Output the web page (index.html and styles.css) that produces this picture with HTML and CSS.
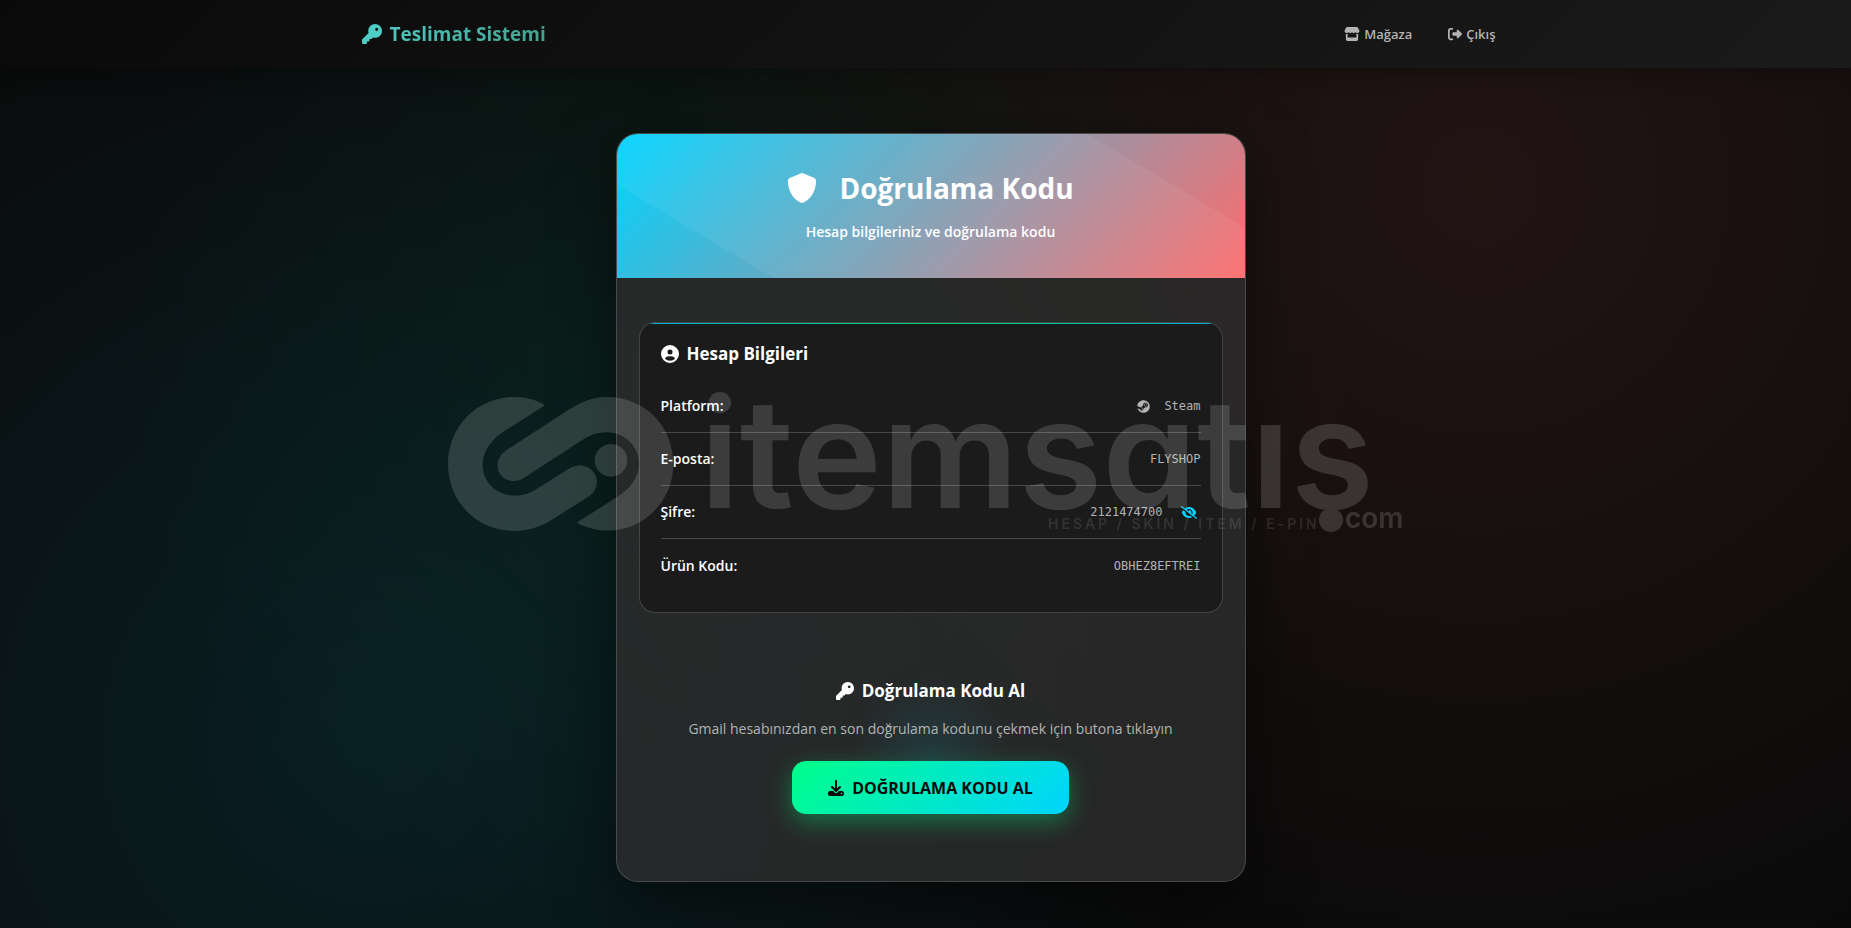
FILE: index.html
```html
<!DOCTYPE html>
<html lang="tr">
<head>
  <meta charset="UTF-8">
  <meta name="viewport" content="width=device-width, initial-scale=1.0">
  <title>Teslimat Sistemi</title>
  <link rel="stylesheet" href="styles.css">
</head>
<body>
  <header class="navbar">
    <div class="navbar-inner">
      <a href="#" class="brand">
        <svg class="icon" viewBox="0 0 512 512"><path d="M336 352c97.200 0 176-78.800 176-176S433.200 0 336 0S160 78.800 160 176c0 18.700 2.900 36.800 8.300 53.700L7 391c-4.500 4.500-7 10.600-7 17v80c0 13.300 10.700 24 24 24h80c13.300 0 24-10.700 24-24V448h40c13.300 0 24-10.700 24-24V384h40c6.400 0 12.500-2.500 17-7l33.300-33.300c16.900 5.400 35 8.300 53.700 8.300zM376 96a40 40 0 1 1 0 80 40 40 0 1 1 0-80z"/></svg>
        Teslimat Sistemi
      </a>
      <nav class="nav-links">
        <a href="#" class="nav-link">
          <svg class="icon icon--store" viewBox="0 0 576 512"><path d="M547.6 103.800L490.300 13.100C485.200 5 476.100 0 466.400 0H109.600C99.900 0 90.800 5 85.700 13.100L28.300 103.800c-29.600 46.800-3.400 111.900 51.900 119.400c4 .5 8.100 .8 12.100 .8c26.100 0 49.300-11.400 65.200-29c15.900 17.600 39.100 29 65.200 29c26.100 0 49.300-11.400 65.200-29c15.900 17.600 39.100 29 65.200 29c26.200 0 49.300-11.400 65.200-29c16 17.600 39.100 29 65.200 29c4.100 0 8.100-.3 12.100-.8c55.500-7.400 81.800-72.500 52.100-119.400zM499.700 254.900l-.1 0c-5.300 .7-10.700 1.100-16.200 1.100c-12.400 0-24.300-1.900-35.400-5.300V384H128V250.600c-11.200 3.500-23.200 5.400-35.600 5.400c-5.500 0-11-.4-16.300-1.100l-.1 0c-4.100-.6-8.100-1.300-12-2.300V384v64c0 35.300 28.700 64 64 64H448c35.300 0 64-28.700 64-64V384 252.600c-4 1-8 1.800-12.300 2.300z"/></svg>
          Mağaza
        </a>
        <a href="#" class="nav-link">
          <svg class="icon" viewBox="0 0 512 512"><path d="M377.900 105.900L500.700 228.700c7.200 7.200 11.300 17.100 11.300 27.300s-4.100 20.100-11.300 27.300L377.900 406.100c-6.400 6.400-15 9.900-24 9.900c-18.700 0-33.900-15.200-33.900-33.900l0-62.100-128 0c-17.700 0-32-14.300-32-32l0-64c0-17.700 14.300-32 32-32l128 0 0-62.100c0-18.700 15.200-33.900 33.900-33.900c9 0 17.600 3.600 24 9.900zM160 96L96 96c-17.700 0-32 14.300-32 32l0 256c0 17.700 14.300 32 32 32l64 0c17.700 0 32 14.300 32 32s-14.300 32-32 32l-64 0c-53 0-96-43-96-96L0 128C0 75 43 32 96 32l64 0c17.700 0 32 14.300 32 32s-14.300 32-32 32z"/></svg>
          Çıkış
        </a>
      </nav>
    </div>
  </header>

  <main class="main">
    <div class="card">
      <div class="card-header">
        <h1 class="card-title">
          <svg class="icon icon--shield" viewBox="0 0 512 512"><path d="M256 0c4.600 0 9.200 1 13.400 2.900L457.700 82.800c22 9.300 38.400 31 38.300 57.200c-.5 99.200-41.300 280.700-213.600 363.200c-16.700 8-36.100 8-52.800 0C57.300 420.700 16.500 239.200 16 140c-.1-26.200 16.300-47.900 38.300-57.200L242.700 2.900C246.800 1 251.400 0 256 0z"/></svg>
          Doğrulama Kodu
        </h1>
        <p class="card-subtitle">Hesap bilgileriniz ve doğrulama kodu</p>
      </div>

      <div class="card-body">
        <section class="account">
          <h2 class="section-title">
            <svg class="icon icon--title" viewBox="0 0 512 512"><path d="M399 384.200C376.900 345.800 335.400 320 288 320H224c-47.400 0-88.900 25.800-111 64.200c35.200 39.200 86.200 63.800 143 63.800s107.800-24.700 143-63.800zM0 256a256 256 0 1 1 512 0A256 256 0 1 1 0 256zm256 16a72 72 0 1 0 0-144 72 72 0 1 0 0 144z"/></svg>
            Hesap Bilgileri
          </h2>
          <dl class="info-list">
            <div class="info-row">
              <dt class="info-label">Platform:</dt>
              <dd class="info-value">
                <svg class="icon icon--steam" viewBox="0 0 496 512"><path d="M496 256c0 137-111.200 248-248.400 248-113.800 0-209.600-76.300-239-180.400l95.200 39.300c6.400 32.100 34.900 56.400 68.900 56.400 39.200 0 71.900-32.400 70.200-73.500l84.500-60.200c52.100 1.300 95.800-40.900 95.800-93.500 0-51.600-42-93.500-93.700-93.500s-93.700 42-93.700 93.500v1.200L176.600 279c-15.500-.9-30.700 3.400-43.500 12.100L0 236.100C10.200 108.400 117.100 8 247.600 8 384.800 8 496 119 496 256zM155.700 384.300l-30.500-12.600a52.790 52.790 0 0 0 27.200 25.800c26.900 11.200 57.800-1.600 69-28.400 5.400-13 5.500-27.300.1-40.300-5.400-13-15.500-23.200-28.500-28.600-12.900-5.400-26.700-5.200-38.900-.6l31.500 13c19.800 8.200 29.200 30.900 20.900 50.700-8.300 19.900-31 29.200-50.800 21zm173.800-129.900c-34.400 0-62.400-28-62.400-62.300s28-62.300 62.400-62.300 62.400 28 62.400 62.300-27.900 62.300-62.400 62.300zm.1-15.600c25.900 0 46.900-21 46.900-46.800 0-25.900-21-46.800-46.900-46.800s-46.900 21-46.900 46.800c.1 25.800 21.100 46.800 46.900 46.800z"/></svg>
                Steam
              </dd>
            </div>
            <div class="info-row">
              <dt class="info-label">E-posta:</dt>
              <dd class="info-value">FLYSHOP</dd>
            </div>
            <div class="info-row">
              <dt class="info-label">Şifre:</dt>
              <dd class="info-value">
                2121474700
                <button type="button" class="toggle-btn" aria-label="Şifreyi gizle">
                  <svg class="icon icon--eye" viewBox="0 0 640 512"><path d="M38.800 5.100C28.400-3.100 13.300-1.200 5.100 9.200S-1.200 34.700 9.200 42.900l592 464c10.400 8.200 25.500 6.300 33.700-4.100s6.300-25.500-4.100-33.700L525.600 386.700c39.600-40.600 66.400-86.100 79.900-118.400c3.300-7.900 3.300-16.700 0-24.600c-14.900-35.700-46.200-87.700-93-131.100C465.500 68.800 400.800 32 320 32c-68.200 0-125 26.300-169.300 60.800L38.800 5.100zM223.100 149.500C248.600 126.200 282.700 112 320 112c79.500 0 144 64.500 144 144c0 24.900-6.300 48.300-17.400 68.700L408 294.500c8.400-19.300 10.600-41.400 4.800-63.300c-11.100-41.500-47.800-69.400-88.600-71.100c-5.800-.2-9.200 6.100-7.400 11.700c2.100 6.400 3.300 13.200 3.300 20.300c0 10.200-2.400 19.800-6.600 28.300l-90.300-70.800zM373 389.900c-16.400 6.500-34.300 10.100-53 10.100c-79.500 0-144-64.500-144-144c0-6.900 .5-13.600 1.400-20.200L83.100 161.500C60.300 191.200 44 220.800 34.500 243.700c-3.300 7.900-3.300 16.700 0 24.600c14.900 35.700 46.200 87.700 93 131.100C174.500 443.200 239.200 480 320 480c47.800 0 89.900-12.900 126.200-32.500L373 389.900z"/></svg>
                </button>
              </dd>
            </div>
            <div class="info-row">
              <dt class="info-label">Ürün Kodu:</dt>
              <dd class="info-value">OBHEZ8EFTREI</dd>
            </div>
          </dl>
        </section>

        <section class="code">
          <h2 class="section-title">
            <svg class="icon icon--title" viewBox="0 0 512 512"><path d="M336 352c97.200 0 176-78.800 176-176S433.200 0 336 0S160 78.800 160 176c0 18.700 2.900 36.800 8.300 53.700L7 391c-4.500 4.500-7 10.600-7 17v80c0 13.300 10.700 24 24 24h80c13.300 0 24-10.700 24-24V448h40c13.300 0 24-10.700 24-24V384h40c6.400 0 12.500-2.500 17-7l33.300-33.300c16.900 5.400 35 8.300 53.700 8.300zM376 96a40 40 0 1 1 0 80 40 40 0 1 1 0-80z"/></svg>
            Doğrulama Kodu Al
          </h2>
          <p class="code-text">Gmail hesabınızdan en son doğrulama kodunu çekmek için butona tıklayın</p>
          <button type="button" class="btn">
            <svg class="icon" viewBox="0 0 512 512"><path d="M288 32c0-17.700-14.300-32-32-32s-32 14.300-32 32V274.700l-73.400-73.400c-12.500-12.500-32.800-12.500-45.300 0s-12.500 32.800 0 45.300l128 128c12.500 12.500 32.800 12.500 45.300 0l128-128c12.500-12.500 12.500-32.800 0-45.300s-32.800-12.500-45.300 0L288 274.700V32zM64 352c-35.300 0-64 28.700-64 64v32c0 35.300 28.700 64 64 64H448c35.300 0 64-28.700 64-64V416c0-35.300-28.700-64-64-64H346.500l-45.300 45.300c-25 25-65.500 25-90.500 0L165.500 352H64zm368 56a24 24 0 1 1 0 48 24 24 0 1 1 0-48z"/></svg>
            DOĞRULAMA KODU AL
          </button>
        </section>
      </div>
    </div>
  </main>

  <!-- Watermark over the whole page -->
  <svg class="watermark" viewBox="0 0 956 136" aria-hidden="true">
    <g transform="translate(-18 -26) scale(.3333)">
      <path d="M345 106C320 90 290 81 255 81C140 81 54 170 54 283C54 395 140 483 253 483C310 483 350 460 378 442L478 378C502 360 508 330 492 308C474 284 442 280 415 297L320 357C298 371 278 377 255 377C200 377 158 337 158 285C158 240 185 210 220 185Z"/>
      <path d="M230 240L400 130C440 103 480 81 530 81C645 81 730 168 730 283C730 355 692 416 640 450C585 487 510 494 440 458L560 382C600 357 627 325 627 280C627 230 585 187 530 187C505 187 485 193 465 205L280 325C255 341 222 333 208 308C196 283 204 257 230 240Z"/>
      <circle cx="543" cy="271" r="49"/>
    </g>
    <text class="watermark-name" x="252" y="112">itemsatıs</text>
    <circle cx="883" cy="124" r="12"/>
    <text class="watermark-com" x="897" y="132">com</text>
    <text class="watermark-tag" x="600" y="133">HESAP / SKIN / ITEM / E-PIN</text>
  </svg>
</body>
</html>
```
FILE: styles.css
```css
* {
  box-sizing: border-box;
}

body {
  margin: 0;
  min-height: 100vh;
  font-family: "Open Sans", "Noto Sans", sans-serif;
  font-size: 14px;
  line-height: 20px;
  color: #fff;
  background:
    radial-gradient(circle at 20% 80%, rgba(0, 212, 255, 0.1) 0%, transparent 50%),
    radial-gradient(circle at 80% 20%, rgba(255, 107, 107, 0.1) 0%, transparent 50%),
    radial-gradient(circle at 40% 40%, rgba(0, 255, 136, 0.06) 0%, transparent 50%),
    #0a0a0a;
}

h1,
h2,
p,
dl,
dd {
  margin: 0;
}

a {
  text-decoration: none;
}

.icon {
  width: 1em;
  height: 1em;
  fill: currentColor;
  flex-shrink: 0;
}

/* Navbar */
.navbar {
  padding-left: 6px;
  background: linear-gradient(135deg, #0a0a0a, #1a1a1a);
  box-shadow: 0 4px 20px rgba(0, 0, 0, 0.3);
}

.navbar-inner {
  display: flex;
  justify-content: space-between;
  align-items: center;
  max-width: 1134px;
  height: 68px;
  margin: 0 auto;
}

.brand {
  display: flex;
  align-items: center;
  gap: 8px;
  font-size: 19px;
  font-weight: 700;
  background: linear-gradient(135deg, #4ecdc4, #44a08d);
  -webkit-background-clip: text;
  background-clip: text;
  color: transparent;
}

.brand .icon {
  width: 20px;
  height: 20px;
  fill: #4ecdc4;
}

.nav-links {
  display: flex;
  gap: 36px;
}

.nav-link {
  display: flex;
  align-items: center;
  gap: 4px;
  font-size: 13px;
  font-weight: 600;
  color: #b3b3b3;
}

.nav-link .icon {
  height: 14px;
  width: 14px;
}

.nav-link .icon--store {
  width: 16px;
}

/* Card */
.main {
  display: flex;
  justify-content: center;
  padding: 65px 0 46px 10px;
}

.card {
  width: 100%;
  max-width: 630px;
  border: 1px solid rgba(255, 255, 255, 0.16);
  border-radius: 22px;
  background: rgba(45, 45, 45, 0.8);
  box-shadow: 0 20px 60px rgba(0, 0, 0, 0.5);
  overflow: hidden;
}

.card-header {
  position: relative;
  padding: 34px 20px 36px;
  text-align: center;
  background: linear-gradient(135deg, #00d4ff, #ff6b6b);
}

/* Light band across the header */
.card-header::before {
  content: "";
  position: absolute;
  inset: 0;
  background: rgba(255, 255, 255, 0.06);
  clip-path: polygon(0 0, 75% 0, 100% 65%, 100% 100%, 25% 100%, 0 35%);
}

.card-title {
  display: flex;
  justify-content: center;
  align-items: center;
  gap: 22px;
  margin-bottom: 14px;
  font-size: 28px;
  line-height: 40px;
}

.icon--shield {
  width: 30px;
  height: 30px;
}

.card-subtitle {
  font-weight: 600;
}

.card-body {
  padding: 44px 22px 67px;
}

.account {
  position: relative;
  padding: 21px 21px 20px;
  border: 1px solid rgba(255, 255, 255, 0.18);
  border-radius: 16px;
  background: #1b1b1b;
  overflow: hidden;
}

.account::before {
  content: "";
  position: absolute;
  inset: 0 0 auto;
  height: 1px;
  background: linear-gradient(90deg, #00d4ff, #00ff88, #00d4ff);
  opacity: 0.8;
}

.section-title {
  display: flex;
  align-items: center;
  gap: 8px;
  font-size: 17px;
  line-height: 20px;
}

.icon--title {
  width: 18px;
  height: 18px;
}

.info-list {
  margin-top: 16px;
}

.info-row {
  display: flex;
  justify-content: space-between;
  align-items: center;
  height: 53px;
  border-bottom: 1px solid rgba(255, 255, 255, 0.2);
}

.info-row:last-child {
  border-bottom: none;
}

.info-label {
  font-weight: 600;
}

.info-value {
  display: flex;
  align-items: center;
  gap: 14px;
  font-family: "DejaVu Sans Mono", monospace;
  font-size: 12px;
  color: #b3b3b3;
}

.icon--steam {
  width: 13px;
  height: 13px;
}

.toggle-btn {
  display: flex;
  padding: 4px;
  border: none;
  background: none;
  color: #00d4ff;
  cursor: pointer;
}

.icon--eye {
  width: 16px;
  height: 13px;
}

.code {
  display: flex;
  flex-direction: column;
  align-items: center;
  padding-top: 68px;
  background: radial-gradient(circle 80px at 50% 140px, rgba(0, 212, 255, 0.1), transparent);
}

.code-text {
  margin: 18px 0 22px;
  color: #b3b3b3;
}

.btn {
  display: flex;
  align-items: center;
  gap: 8px;
  height: 53px;
  padding: 0 36px;
  border: none;
  border-radius: 14px;
  font-family: inherit;
  font-size: 16px;
  font-weight: 700;
  color: #0a0a0a;
  background: linear-gradient(135deg, #00ff88, #00d4ff);
  box-shadow: 0 8px 24px rgba(0, 255, 136, 0.35);
  cursor: pointer;
}

/* Watermark */
.watermark {
  position: fixed;
  top: 50%;
  left: 50%;
  width: 956px;
  height: 136px;
  transform: translate(-50%, -50%);
  overflow: visible;
  fill: #fff;
  opacity: 0.15;
  pointer-events: none;
  font-family: Inter, sans-serif;
}

.watermark-name {
  font-size: 152px;
  font-weight: 600;
  font-feature-settings: "cv11";
}

.watermark-com {
  font-size: 28px;
  font-weight: 600;
}

.watermark-tag {
  font-size: 14px;
  font-weight: 600;
  letter-spacing: 3px;
  opacity: 0.7;
}
```
